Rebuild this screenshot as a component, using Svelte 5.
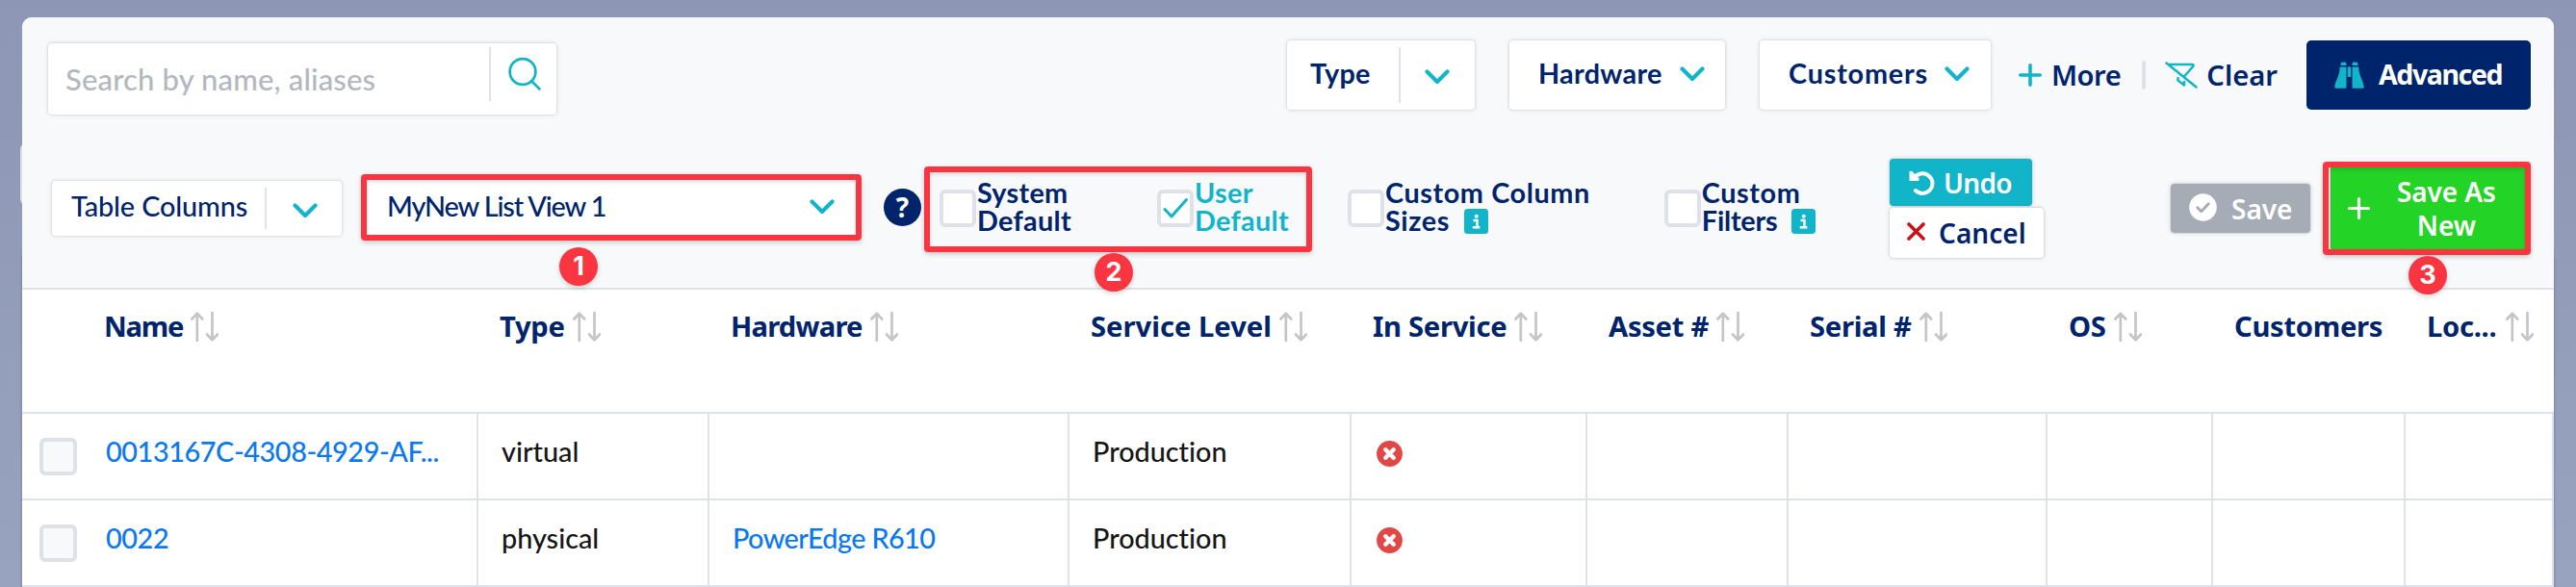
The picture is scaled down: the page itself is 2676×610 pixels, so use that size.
<script>
  const columns = [
    { label: 'Name', sort: true },
    { label: 'Type', sort: true },
    { label: 'Hardware', sort: true },
    { label: 'Service Level', sort: true },
    { label: 'In Service', sort: true },
    { label: 'Asset #', sort: true },
    { label: 'Serial #', sort: true },
    { label: 'OS', sort: true },
    { label: 'Customers', sort: false },
    { label: 'Loc...', sort: true, tight: true },
  ];

  const rows = [
    { name: '0013167C-4308-4929-AF...', type: 'virtual', hardware: '', level: 'Production' },
    { name: '0022', type: 'physical', hardware: 'PowerEdge R610', level: 'Production' },
  ];
</script>

{#snippet chevron()}
  <svg class="chevron" width="26" height="16" viewBox="0 0 26 16">
    <path d="M2.500 2.500 13 13 23.500 2.500" />
  </svg>
{/snippet}

{#snippet info()}
  <svg class="info" width="25" height="26" viewBox="0 0 25 26">
    <rect width="25" height="26" rx="3.500" fill="#11b4c9" />
    <circle cx="12.700" cy="7.700" r="2" fill="#fff" />
    <path d="M9.500 12h4v7M8.800 19.200h7.600" fill="none" stroke="#fff" stroke-width="2.400" />
  </svg>
{/snippet}

<div class="page">
  <div class="side-tab"></div>
  <div class="panel">
    <div class="toolbar">
      <div class="filters">
        <div class="search box">
          <span class="placeholder">Search by name, aliases</span>
          <span class="search-icon">
            <svg width="36" height="36" viewBox="0 0 36 36" fill="none" stroke="#11b4c9" stroke-width="2.700" stroke-linecap="round">
              <circle cx="16" cy="15.500" r="13.400" />
              <path d="m25.500 25.500 8 8" />
            </svg>
          </span>
        </div>
        <div class="box filter type"><span class="t">Type</span><span class="split">{@render chevron()}</span></div>
        <div class="box filter hardware"><span class="t">Hardware</span>{@render chevron()}</div>
        <div class="box filter customers"><span class="t">Customers</span>{@render chevron()}</div>
        <div class="link more">
          <svg width="24" height="24" viewBox="0 0 24 24" stroke="#11b4c9" stroke-width="3.600" stroke-linecap="round"><path d="M12 1.800v20.400M1.800 12h20.400" /></svg>
          <span>More</span>
        </div>
        <div class="bar"></div>
        <div class="link clear">
          <svg width="34" height="28" viewBox="0 0 34 28" fill="none" stroke="#11b4c9" stroke-width="2.500" stroke-linecap="round" stroke-linejoin="round">
            <path d="M1.500 1.500 32.500 26.500M5 3h23.200c1.300 0 1.700 1 1 2L20 15.500M13.500 17v2.500l6.500 5v-3.500" />
          </svg>
          <span>Clear</span>
        </div>
        <div class="advanced">
          <svg width="31" height="28" viewBox="0 0 31 28" fill="#11b4c9">
            <path d="M8.500.5h2.500q1.500 0 1.500 2v1.500H6.500V2.500q0-2 2-2zM20 .5h2.500q2 0 2 2v1.500h-6V2.500q0-2 1.500-2zM5.700 5.500h6.800V26.500q0 1.200-1.200 1.200H1.500Q.2 27.700.3 26.300C.6 20.500 5.700 15 5.700 5.500zM18.500 5.500h6.800c0 9.500 5.100 15 5.400 20.800.1 1.400-.6 1.400-1.200 1.400H19.700q-1.200 0-1.200-1.200zM13.700 5.500h3.600V16h-3.600z" />
          </svg>
          <span>Advanced</span>
        </div>
      </div>

      <div class="views">
        <div class="box columns"><span class="t">Table Columns</span><span class="split">{@render chevron()}</span></div>
        <div class="box view"><span class="t">MyNew List View 1</span>{@render chevron()}</div>
        <div class="help">?</div>
        <div class="option system"><i class="check"></i><span>System<br />Default</span></div>
        <div class="option user">
          <i class="check">
            <svg width="26" height="26" viewBox="0 0 26 26" fill="none" stroke="#11b4c9" stroke-width="3" stroke-linecap="round" stroke-linejoin="round"><path d="m2 14.500 7 7.500L24.500 4.500" /></svg>
          </i>
          <span>User<br />Default</span>
        </div>
        <div class="option sizes"><i class="check"></i><span>Custom Column<br />Sizes {@render info()}</span></div>
        <div class="option custom"><i class="check"></i><span>Custom<br /><em>Filters</em> {@render info()}</span></div>
        <div class="revert">
          <div class="btn undo">
            <svg width="27" height="26" viewBox="0 0 27 26" fill="none" stroke="#fff" stroke-width="4"><path d="M5.500 8A10.300 10.300 0 1 1 7 21" stroke-linecap="round" /><path d="M.5 1 3 .8 10.800 8.500 10.200 11H.5z" fill="#fff" stroke="none" /></svg>
            <span>Undo</span>
          </div>
          <div class="btn cancel">
            <svg width="19" height="19" viewBox="0 0 19 19" stroke="#c81414" stroke-width="3.600" stroke-linecap="round"><path d="m2 2 15 15M17 2 2 17" /></svg>
            <span>Cancel</span>
          </div>
        </div>
        <div class="btn save">
          <svg width="29" height="29" viewBox="0 0 29 29"><circle cx="14.500" cy="14.500" r="14.300" fill="#fff" /><path d="m8.800 14.800 4 4 7.400-8" fill="none" stroke="#a5acb5" stroke-width="2.800" stroke-linecap="round" stroke-linejoin="round" /></svg>
          <span>Save</span>
        </div>
        <div class="btn save-new">
          <svg width="23" height="23" viewBox="0 0 23 23" stroke="#fff" stroke-width="3.200" stroke-linecap="round"><path d="M11.500 1.600v19.800M1.600 11.500h19.800" /></svg>
          <span>Save As<br />New</span>
        </div>
      </div>
    </div>

    <div class="grid head">
      {#each columns as c}
        <div class="th">
          <span>{c.label}</span>
          {#if c.sort}
            <svg class:tight={c.tight} width="29" height="31" viewBox="0 0 29 31" fill="none" stroke="#c5c5c5" stroke-width="2.700" stroke-linecap="round" stroke-linejoin="round">
              <path d="M6.800 30V2M1.400 7.500 6.800 1.800 12.200 7.500M22.500 1v28M17 23.500l5.500 5.700 5.500-5.700" />
            </svg>
          {/if}
        </div>
      {/each}
    </div>
    {#each rows as r}
      <div class="grid row">
        <div class="name"><i class="check"></i><a href="#top">{r.name}</a></div>
        <div>{r.type}</div>
        <div><a class="model" href="#top">{r.hardware}</a></div>
        <div>{r.level}</div>
        <div class="status">
          <svg width="27" height="27" viewBox="0 0 27 27"><circle cx="13.500" cy="13.500" r="13.400" fill="#e04747" /><path d="m9.300 9.300 8.400 8.400M17.700 9.300l-8.400 8.400" stroke="#fff" stroke-width="4.400" stroke-linecap="round" /></svg>
        </div>
        <div></div><div></div><div></div><div></div><div></div>
      </div>
    {/each}
  </div>

  <div class="mark m1"></div>
  <div class="mark m2"></div>
  <div class="mark m3"></div>
  <div class="badge b1">1</div>
  <div class="badge b2">2</div>
  <div class="badge b3">3</div>
</div>

<style>
  :global(body) { margin: 0; }
  .page, .page * { box-sizing: border-box; }
  .page {
    position: relative;
    width: 2676px;
    height: 610px;
    overflow: hidden;
    padding: 18px 23px 0;
    background: linear-gradient(#8d97b5, #98a3bf);
    font: 500 28.800px Lato, sans-serif;
    font-variant-ligatures: none;
    color: #00246b;
    white-space: nowrap;
  }
  svg { display: block; flex: none; }
  .side-tab {
    position: absolute;
    left: 21px;
    top: 149px;
    width: 12px;
    height: 64px;
    border-radius: 6px;
    background: #dcdfe5;
  }
  .panel {
    position: relative;
    height: 592px;
    border-radius: 10px 10px 0 0;
    background: #fff;
    box-shadow: 0 242px 3px rgba(60, 70, 110, .5);
  }
  .toolbar {
    height: 283px;
    border-bottom: 2px solid #dee1e7;
    border-radius: 10px 10px 0 0;
    background: #f8f9fb;
  }
  .box {
    display: flex;
    align-items: center;
    border-radius: 4px;
    background: #fff;
    box-shadow: 0 0 0 1px #e1e2e2, 0 0 5px rgba(0, 0, 0, .14);
  }
  .chevron { fill: none; stroke: #11b4c9; stroke-width: 4.200; stroke-linecap: round; stroke-linejoin: round; }
  .split { display: flex; align-items: center; border-left: 2px solid #dfe2e8; }

  .filters { display: flex; align-items: flex-start; padding: 24px 24px 0 27px; height: 129px; }
  .search { width: 528px; height: 74px; margin-top: 3px; }
  .placeholder { width: 458px; padding-left: 18px; font-size: 31px; font-weight: 500; color: #b2b8be; letter-spacing: .150px; }
  .search-icon { height: 56px; margin-top: -10px; border-left: 2px solid #dfe2e8; padding: 10px 0 0 17px; }
  .filter { height: 72px; font-weight: 700; }
  .filter .t { padding-bottom: 4px; }
  .type { width: 195px; margin-left: 759px; padding-left: 24px; }
  .type .t { width: 92px; letter-spacing: .2px; }
  .type .split { height: 58px; padding: 4px 0 0 25px; }
  .hardware { width: 224px; margin-left: 36px; padding-left: 30px; }
  .hardware .t { width: 147px; letter-spacing: .3px; }
  .customers { width: 240px; margin-left: 36px; padding-left: 30px; }
  .customers .t { width: 162px; letter-spacing: .8px; }
  .hardware .chevron, .customers .chevron { margin-top: -3px; }
  .link { display: flex; align-items: center; height: 72px; font: 600 29.200px "Noto Sans", sans-serif; }
  .more { margin-left: 29px; gap: 10px; letter-spacing: -.5px; }
  .bar { width: 4px; height: 30px; margin: 21px 0 0 22px; border-radius: 2px; background: #dfe1e8; }
  .clear { margin-left: 20px; gap: 9px; }
  .advanced {
    display: flex; align-items: center; gap: 15px;
    width: 233px; height: 72px; margin-left: auto; padding-left: 29px;
    border-radius: 5px; background: #00246b; color: #fff;
    font: 700 28.500px "Noto Sans", sans-serif; letter-spacing: -1.400px;
  }
  .advanced span { padding-bottom: 2px; }

  .views { display: flex; align-items: center; height: 139px; padding: 0 25px 0 31px; }
  .columns { width: 301px; height: 57px; padding-left: 20px; }
  .columns .t { width: 201px; padding-bottom: 5px; letter-spacing: -.1px; }
  .columns .split { height: 43px; padding: 4px 0 0 27px; }
  .view { width: 511px; height: 60px; margin-left: 24px; padding: 0 23px 0 23px; justify-content: space-between; letter-spacing: -1.100px; }
  .view .t { padding-bottom: 5px; }
  .view .chevron { margin-top: -3px; }
  .help {
    width: 39px; height: 39px; margin: -2px 0 0 28px; border-radius: 50%;
    background: #00246b; color: #fff; font: 700 28px/39px "Noto Sans", sans-serif; text-align: center;
  }
  .option { display: flex; align-items: center; font-weight: 700; line-height: 29px; letter-spacing: .3px; }
  .option span { margin-left: 1px; padding-bottom: 3px; }
  .check { display: block; flex: none; width: 38px; height: 39px; border: 4px solid #dee1e7; border-radius: 6px; background: #fff; }
  .check svg { margin: 2px 0 0 2px; }
  .system { margin-left: 19px; }
  .user { color: #11b4c9; margin-left: 89px; }
  .sizes { margin-left: 61px; letter-spacing: .6px; }
  .custom { margin-left: 77px; letter-spacing: .6px; }
  .custom em { font-style: normal; letter-spacing: -.2px; }
  .info { display: inline-block; margin-left: 7px; vertical-align: -3px; }
  .revert { margin-left: 77px; }
  .btn {
    display: flex; align-items: center; border-radius: 4px; color: #fff;
    box-shadow: 0 0 0 1px #dcdede, 0 0 5px rgba(0, 0, 0, .16);
    font: 600 28px "Noto Sans", sans-serif;
  }
  .undo { width: 148px; height: 49px; padding-left: 20px; gap: 9px; background: #11b4c9; letter-spacing: -.700px; }
  .cancel { width: 160px; height: 52px; margin-top: 2px; padding-left: 18px; gap: 14px; background: #fff; color: #00246b; letter-spacing: 0; }
  .cancel svg { margin-top: -3px; }
  .save { width: 145px; height: 51px; margin-left: auto; padding-left: 19px; gap: 15px; background: #a5acb5; }
  .save svg { margin-top: -3px; }
  .save-new { width: 207px; height: 89px; margin-left: 21px; padding: 0 0 0 18px; gap: 28px; background: #23d426; text-align: center; line-height: 35px; letter-spacing: -.100px; }

  .grid { display: grid; grid-template-columns: 474px 240px 374px 293px 245px 209px 269px 172px 200px 154px; }
  .head { height: 129px; border-bottom: 2px solid #dee1e7; font: 700 29.200px/40px "Noto Sans", sans-serif; letter-spacing: -.300px; }
  .th { display: flex; align-items: flex-start; gap: 8px; padding: 18px 0 0 22px; }
  .th:first-child { padding-left: 85px; letter-spacing: -1.200px; }
  .th:nth-child(3) { letter-spacing: -.800px; }
  .th:nth-child(4) { letter-spacing: 0; }
  .th svg { margin-top: 5px; }
  .th svg.tight { margin-left: 2px; }
  .row { height: 90px; border-bottom: 2px solid #dee1e7; color: #161616; font-weight: 500; }
  .row > div { border-right: 2px solid #dfe2e7; padding: 21px 0 0 24px; line-height: 36px; }
  .row > .name { display: flex; padding-left: 18px; letter-spacing: -.400px; }
  .row > .status { padding: 28px 0 0 26px; }
  .name .check { background: #f8f9fb; margin: 4px 30px 0 0; width: 39px; }
  a { color: #0a78f0; text-decoration: none; }
  .model { letter-spacing: -.600px; }

  .mark { position: absolute; border: 6px solid #f93542; border-radius: 4px; box-shadow: 0 2px 5px rgba(0, 0, 0, .2), inset 0 2px 4px rgba(0, 0, 0, .15); }
  .m1 { left: 375px; top: 181px; width: 520px; height: 69px; }
  .m2 { left: 960px; top: 173px; width: 403px; height: 89px; }
  .m3 { left: 2413px; top: 168px; width: 216px; height: 97px; }
  .badge {
    position: absolute; width: 40px; height: 40px; border-radius: 50%; background: #f93542; color: #fff;
    font: 700 27px/40px Inter, sans-serif; text-align: center; box-shadow: 0 2px 5px rgba(0, 0, 0, .18);
  }
  .b1 { left: 581px; top: 257px; }
  .b2 { left: 1137px; top: 263px; }
  .b3 { left: 2502px; top: 266px; }
</style>
